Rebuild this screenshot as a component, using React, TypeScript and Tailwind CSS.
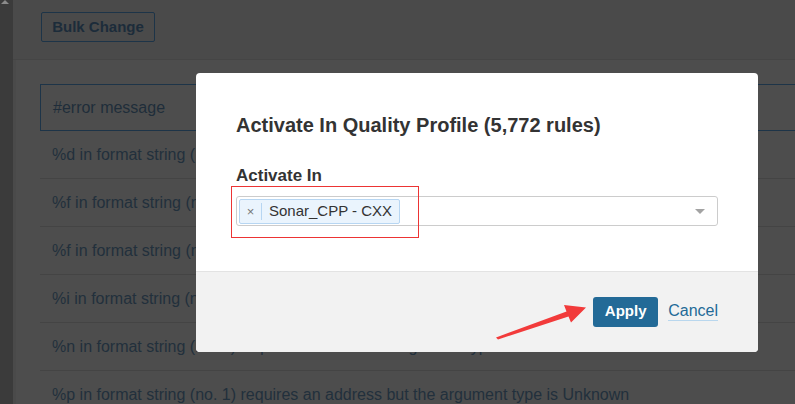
import React from "react";

const rows = [
  "%d in format string (no. 1) requires 'int' but the argument type is Unknown.",
  "%f in format string (no. 1) requires 'double' but the argument type is Unknown.",
  "%f in format string (no. 1) requires 'double' but the argument type is Unknown.",
  "%i in format string (no. 1) requires 'int' but the argument type is Unknown.",
  "%n in format string (no. 1) requires 'int *' but the argument type is Unknown.",
  "%p in format string (no. 1) requires an address but the argument type is Unknown",
];

const font = { fontFamily: '"Liberation Sans", Arial, sans-serif' };

export default function App() {
  return (
    <div className="relative flex w-[795px] h-[404px] overflow-hidden bg-[#4a4a4a]" style={font}>
      {/* scrollbar strip */}
      <div className="relative w-[13px] shrink-0 bg-[#3b3b3b]">
        <div className="absolute left-[1px] top-0 w-0 h-0 border-l-[4px] border-r-[4px] border-b-[4px] border-l-transparent border-r-transparent border-b-[#8a8a8a]" />
      </div>

      <div className="flex flex-col flex-1 min-w-0">
        <div className="h-[60px] shrink-0 pl-[28px] pt-[12px] border-b border-[#454545]">
          <button className="h-[30px] w-[114px] rounded-[2px] border border-[#1d3448] text-[15px] font-bold text-[#1c2c3a]">
            Bulk Change
          </button>
        </div>

        <div className="flex-1 ml-[3px] bg-[#4d4d4d] pl-[24px] pt-[24px]">
          <div className="w-[900px]">
            <div className="h-[47px] border border-[#1d3448] flex items-center pl-[12px] text-[16px] text-[#1f2d3a]">
              #error message
            </div>
            {rows.map((r, i) => (
              <div
                key={i}
                className="h-[48px] border-b border-[#444444] flex items-center pl-[12px] text-[16px] text-[#22303c] whitespace-nowrap"
              >
                {r}
              </div>
            ))}
          </div>
        </div>
      </div>

      {/* modal */}
      <div className="absolute left-[196px] top-[73px] w-[562px] h-[279px] rounded-[4px] overflow-hidden bg-white flex flex-col">
        <div className="flex-1 px-[40px] pt-[40px]">
          <h2 className="text-[20px] leading-[24px] font-bold text-[#333]">
            Activate In Quality Profile (5,772 rules)
          </h2>
          <div className="mt-[29px] text-[17px] leading-[20px] font-bold text-[#333]">Activate In</div>
          <div className="mt-[10px] h-[30px] w-[482px] rounded-[3px] border border-[#cccccc] flex items-center pl-[2px] pr-[12px]">
            <div className="h-[25px] flex items-center rounded-[2px] border border-[#b7d6f2] bg-[#eaf4fd] text-[15px] text-[#333]">
              <span className="w-[22px] text-center text-[13px] text-[#777] border-r border-[#b7d6f2] leading-[17px]">×</span>
              <span className="pl-[7px] pr-[7px]">Sonar_CPP - CXX</span>
            </div>
            <div className="ml-auto w-0 h-0 border-l-[5px] border-r-[5px] border-t-[5px] border-l-transparent border-r-transparent border-t-[#a3a3a3]" />
          </div>
        </div>
        <div className="h-[81px] shrink-0 border-t border-[#e3e3e3] bg-[#f2f2f2] flex items-center justify-end pr-[40px] pb-[1px]">
          <button className="h-[30px] w-[65px] rounded-[3px] bg-[#236a97] text-white text-[15px] font-bold">
            Apply
          </button>
          <span className="ml-[10px] text-[16px] leading-[18px] text-[#236a97] border-b border-[#b9d7ee]">Cancel</span>
        </div>
      </div>

      {/* annotation */}
      <div className="absolute left-[231px] top-[186px] w-[188px] h-[52px] border border-[#ec3434]" />
      <svg className="absolute left-0 top-0" width="795" height="404">
        <polygon
          points="496,337.5 566.5,311.5 564,305 586,307.5 571,322.5 568.5,316.5 498,339.5"
          fill="#f23b3b"
        />
      </svg>
    </div>
  );
}
